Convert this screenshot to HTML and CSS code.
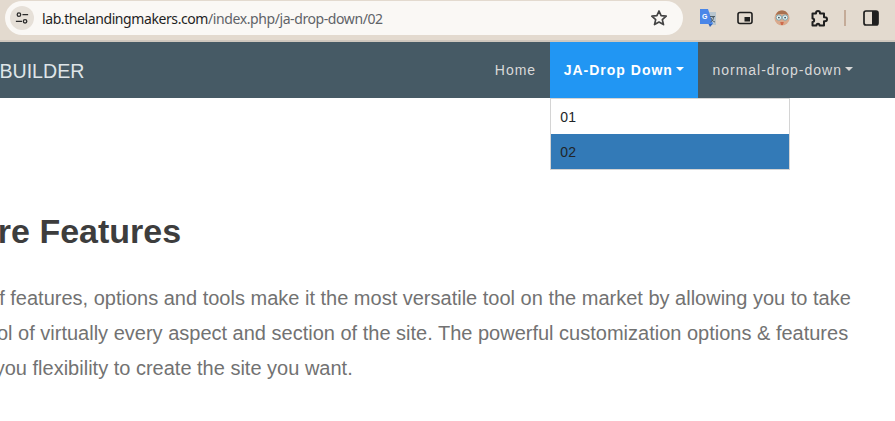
FILE: index.html
```html
<!DOCTYPE html>
<html lang="en">
<head>
<meta charset="utf-8">
<title>JA Drop Down 02</title>
<link rel="stylesheet" href="styles.css">
</head>
<body>
<div class="window">
  <header class="toolbar">
    <div class="omnibox">
      <span class="site-info">
        <svg width="16" height="16" viewBox="0 0 16 16" fill="none" stroke="#2b2b2b" stroke-width="1.500"><circle cx="4.500" cy="4.200" r="2"/><path d="M8.500 4.200H15M1 11.800h7"/><circle cx="11.500" cy="11.800" r="2"/></svg>
      </span>
      <span class="url"><span class="host">lab.thelandingmakers.com</span><span class="path">/index.php/ja-drop-down/02</span></span>
      <svg class="star" width="18" height="18" viewBox="0 0 18 18" fill="none" stroke="#444" stroke-width="1.700" stroke-linejoin="round"><path d="M9 2l2.100 4.700 5.100.5-3.900 3.400 1.200 5L9 13l-4.500 2.600 1.200-5L1.800 7.200l5.100-.5z"/></svg>
    </div>
    <div class="actions">
      <svg class="ext-translate" width="18" height="20" viewBox="0 0 18 20"><path d="M8 4h9v13H10z" fill="#b9c6cf"/><path d="M1 1h8l5 15H1z" fill="#4a86e8"/><path d="M9.500 16l1.500 3 2.500-3z" fill="#2f62b8"/><text x="3" y="11" class="g-mark">G</text><path d="M11 8.500h5M13.500 8v1.500M11.500 14c2-1 3-3 3.200-5M12 10c.5 2 2 3.500 4 4" stroke="#4d5c66" stroke-width="1" fill="none"/></svg>
      <svg class="pip" width="16" height="14" viewBox="0 0 16 14"><rect x="1" y="1.500" width="14" height="11" rx="2" fill="none" stroke="#1f1f1f" stroke-width="1.600"/><rect x="7.500" y="6" width="5.500" height="4.500" fill="#1f1f1f"/></svg>
      <svg class="avatar" width="16" height="16" viewBox="0 0 18 18"><circle cx="9" cy="9" r="8.500" fill="#d9a98d"/><path d="M2 6c1-4 4-5.500 7-5.500S15 2 16 6c-3-2-11-2-14 0z" fill="#a9714f"/><circle cx="5.500" cy="8.500" r="3" fill="#e8f1f1" stroke="#6fa3ad"/><circle cx="12.500" cy="8.500" r="3" fill="#e8f1f1" stroke="#6fa3ad"/><circle cx="5.500" cy="8.500" r="1" fill="#3b4a52"/><circle cx="12.500" cy="8.500" r="1" fill="#3b4a52"/><path d="M7 13.500h4l-1 3.500H8z" fill="#cf6a4c"/></svg>
      <svg class="puzzle" width="17" height="17" viewBox="0 0 17 17" fill="none" stroke="#1f1f1f" stroke-width="2" stroke-linejoin="round"><path d="M1.500 3.500H5V3a2 2 0 0 1 4 0v.5h4v3.700h1a2 2 0 0 1 0 4h-1v4.300H8.500c0-2.400-3-2.400-3 0h-4v-3.500c2.200 0 2.200-3.500 0-3.500z"/></svg>
      <span class="divider"></span>
      <svg class="panel" width="16" height="16" viewBox="0 0 16 16"><rect x="1" y="1" width="14" height="14" rx="2" fill="none" stroke="#1f1f1f" stroke-width="1.700"/><path d="M9 1h4a2 2 0 0 1 2 2v10a2 2 0 0 1-2 2H9z" fill="#1f1f1f"/></svg>
    </div>
  </header>

  <nav class="navbar">
    <a class="brand">PAGE BUILDER</a>
    <ul class="menu">
      <li class="menu-item"><a class="menu-link">Home</a></li>
      <li class="menu-item is-open">
        <a class="menu-link">JA-Drop Down<span class="caret"></span></a>
        <ul class="dropdown">
          <li class="dropdown-item">01</li>
          <li class="dropdown-item is-active">02</li>
        </ul>
      </li>
      <li class="menu-item"><a class="menu-link">normal-drop-down<span class="caret"></span></a></li>
    </ul>
  </nav>

  <main class="content">
    <h2 class="title">Core Features</h2>
    <p class="lead">Set of features, options and tools make it the most versatile tool on the market by allowing you to take<br>control of virtually every aspect and section of the site. The powerful customization options &amp; features<br>give you flexibility to create the site you want.</p>
  </main>
</div>
</body>
</html>
```
FILE: styles.css
```css
* { box-sizing: border-box; }
html, body { margin: 0; padding: 0; background: #fff; }
.window {
  width: 895px;
  height: 421px;
  overflow: hidden;
  font-family: "Liberation Sans", Arial, sans-serif;
}
.toolbar {
  height: 42px;
  background: #e3dacf;
  border-bottom: 2px solid #cfc8bf;
  display: flex;
  align-items: flex-start;
  padding: 1px 0 0 5px;
}
.omnibox {
  width: 678px;
  height: 34px;
  background: #faf8f5;
  border-radius: 17px;
  display: flex;
  align-items: center;
  padding: 0 15px 0 5px;
}
.site-info {
  width: 24px;
  height: 24px;
  border-radius: 50%;
  background: #e6e0d8;
  display: flex;
  align-items: center;
  justify-content: center;
}
.site-info svg { width: 14px; height: 14px; }
.url {
  flex: 1;
  margin-left: 8px;
  font: 14px "Noto Sans", sans-serif;
  letter-spacing: -0.41px;
  white-space: nowrap;
}
.host { color: #1f1f1f; }
.path { color: #5f6368; }
.star { display: block; }
.actions {
  flex: 1;
  display: flex;
  align-items: center;
  height: 34px;
  padding-left: 16px;
}
.ext-translate { margin-right: 20px; }
.pip { margin-right: 21px; }
.avatar { margin-right: 21px; }
.puzzle { margin-right: 16px; }
.divider { width: 2px; height: 16px; background: #c4ab98; margin-right: 17px; }
.g-mark { font: bold 7px "Liberation Sans", sans-serif; fill: #fff; }

.navbar {
  height: 56px;
  background: #465a65;
  display: flex;
  align-items: stretch;
  justify-content: space-between;
  padding-right: 28px;
  margin-left: -59px;
}
.brand {
  font-size: 19.6px;
  color: #dfe5e8;
  line-height: 58px;
}
.menu {
  list-style: none;
  margin: 0;
  padding: 0;
  display: flex;
}
.menu-item { position: relative; }
.menu-link {
  display: block;
  padding: 0 14px;
  font-size: 14px;
  letter-spacing: 1px;
  line-height: 56px;
  color: #d9d9d9;
  white-space: nowrap;
}
.is-open { background: #2196f3; }
.is-open > .menu-link { color: #fff; font-weight: 700; padding: 0 14.500px 0 13.500px; }
.caret {
  display: inline-block;
  margin-left: 3px;
  vertical-align: 4px;
  border-top: 4px solid currentColor;
  border-left: 4px solid transparent;
  border-right: 4px solid transparent;
}
.dropdown {
  position: absolute;
  top: 100%;
  left: 0;
  width: 240px;
  margin: 0;
  padding: 0;
  list-style: none;
  background: #fff;
  border: 1px solid #d4d4d4;
  z-index: 2;
}
.dropdown-item {
  height: 35px;
  line-height: 36px;
  padding-left: 9px;
  font-size: 14px;
  letter-spacing: 0.3px;
  color: #212529;
}
.dropdown-item.is-active { background: #337ab7; }

.content { margin-left: -47.500px; padding-top: 111px; }
.title {
  margin: 0;
  font-size: 34px;
  line-height: 44px;
  font-weight: 700;
  color: #3d3d3d;
}
.lead {
  margin: 28px 0 0;
  font-size: 20px;
  line-height: 35px;
  color: #727272;
  white-space: nowrap;
}
```
